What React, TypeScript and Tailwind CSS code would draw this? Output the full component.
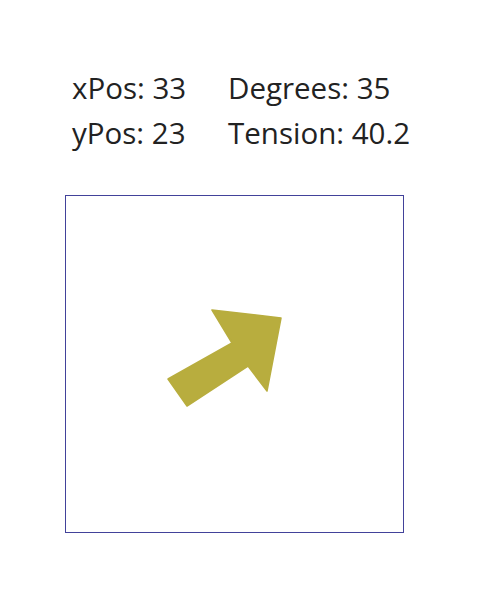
import React from 'react'

const stats = [
    { label: 'xPos', value: '33' },
    { label: 'Degrees', value: '35' },
    { label: 'yPos', value: '23' },
    { label: 'Tension', value: '40.2' },
]

const Arrow = () => (
    <svg width="339" height="338" viewBox="0 0 339 338" className="block">
        <g transform="translate(-66 -196)">
            <polygon
                points="168,379 232,343 212,310 281,318 267,391 248,366 187,406"
                fill="#b8ad3e"
                stroke="#b8ad3e"
                strokeWidth="1.5"
                strokeLinejoin="round"
            />
        </g>
    </svg>
)

export default function App() {
    return (
        <div className="w-[493px] h-[600px] bg-white pt-[65px] pl-[65px]" style={{ fontFamily: '"Open Sans", "Noto Sans", sans-serif' }}>
            <div className="grid grid-cols-[156px_auto] pl-[7px] text-[29.5px] leading-[45px] text-[#222]">
                {stats.map((s) => (
                    <div key={s.label} className="whitespace-nowrap">{s.label}: {s.value}</div>
                ))}
            </div>
            <div className="mt-[40px] w-[339px] h-[338px] border border-[#42429a]">
                <Arrow />
            </div>
        </div>
    )
}
